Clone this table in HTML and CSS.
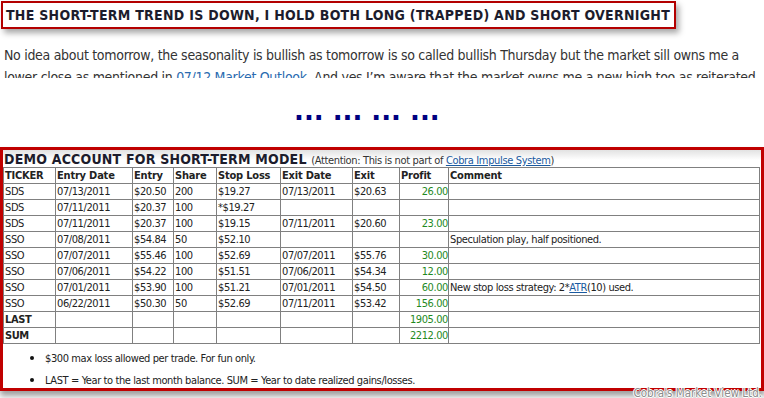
FILE: index.html
```html
<!DOCTYPE html>
<html>
<head>
<meta charset="utf-8">
<link rel="stylesheet" href="styles.css">
</head>
<body>
<div class="page">
  <div class="headline-wrap">
    <h2 class="headline">THE SHORT-TERM TREND IS DOWN, I HOLD BOTH LONG (TRAPPED) AND SHORT OVERNIGHT</h2>
  </div>
  <div class="excerpt">
    <p>No idea about tomorrow, the seasonality is bullish as tomorrow is so called bullish Thursday but the market sill owns me a lower close as mentioned in <a href="#">07/12 Market Outlook</a>. And yes I’m aware that the market owns me a new high too as reiterated many times.</p>
  </div>
  <div class="dots">... ... ... ...</div>
  <div class="demo">
    <div class="demo-title"><b>DEMO ACCOUNT FOR SHORT-TERM MODEL</b> <span class="note">(Attention: This is not part of <a href="#">Cobra Impulse System</a>)</span></div>
    <table class="trades">
      <colgroup>
        <col class="c1"><col class="c2"><col class="c3"><col class="c4"><col class="c5"><col class="c6"><col class="c7"><col class="c8"><col class="c9">
      </colgroup>
      <thead>
        <tr><th>TICKER</th><th>Entry Date</th><th>Entry</th><th>Share</th><th>Stop Loss</th><th>Exit Date</th><th>Exit</th><th>Profit</th><th>Comment</th></tr>
      </thead>
      <tbody>
        <tr><td>SDS</td><td>07/13/2011</td><td>$20.50</td><td>200</td><td>$19.27</td><td>07/13/2011</td><td>$20.63</td><td class="profit">26.00</td><td></td></tr>
        <tr><td>SDS</td><td>07/11/2011</td><td>$20.37</td><td>100</td><td>*$19.27</td><td></td><td></td><td class="profit"></td><td></td></tr>
        <tr><td>SDS</td><td>07/11/2011</td><td>$20.37</td><td>100</td><td>$19.15</td><td>07/11/2011</td><td>$20.60</td><td class="profit">23.00</td><td></td></tr>
        <tr><td>SSO</td><td>07/08/2011</td><td>$54.84</td><td>50</td><td>$52.10</td><td></td><td></td><td class="profit"></td><td>Speculation play, half positioned.</td></tr>
        <tr><td>SSO</td><td>07/07/2011</td><td>$55.46</td><td>100</td><td>$52.69</td><td>07/07/2011</td><td>$55.76</td><td class="profit">30.00</td><td></td></tr>
        <tr><td>SSO</td><td>07/06/2011</td><td>$54.22</td><td>100</td><td>$51.51</td><td>07/06/2011</td><td>$54.34</td><td class="profit">12.00</td><td></td></tr>
        <tr><td>SSO</td><td>07/01/2011</td><td>$53.90</td><td>100</td><td>$51.21</td><td>07/01/2011</td><td>$54.50</td><td class="profit">60.00</td><td>New stop loss strategy: 2*<a href="#">ATR</a>(10) used.</td></tr>
        <tr><td>SSO</td><td>06/22/2011</td><td>$50.30</td><td>50</td><td>$52.69</td><td>07/11/2011</td><td>$53.42</td><td class="profit">156.00</td><td></td></tr>
        <tr><td><b>LAST</b></td><td></td><td></td><td></td><td></td><td></td><td></td><td class="profit">1905.00</td><td></td></tr>
        <tr><td><b>SUM</b></td><td></td><td></td><td></td><td></td><td></td><td></td><td class="profit">2212.00</td><td></td></tr>
      </tbody>
    </table>
    <ul class="notes">
      <li>$300 max loss allowed per trade. For fun only.</li>
      <li>LAST = Year to the last month balance. SUM = Year to date realized gains/losses.</li>
    </ul>
  </div>
  <div class="watermark">Cobra's Market View Ltd.</div>
</div>
</body>
</html>
```
FILE: styles.css
```css
html, body {
  margin: 0;
  padding: 0;
  background: #fff;
}
.page {
  position: relative;
  width: 764px;
  height: 398px;
  overflow: hidden;
  font-family: "DejaVu Sans Condensed", "DejaVu Sans", sans-serif;
  color: #333;
}
.headline-wrap {
  padding: 1px 0 0 1px;
}
.headline {
  display: inline-block;
  margin: 0;
  padding: 4px 4px 3px 3px;
  border: 2px solid #b30000;
  box-shadow: 3px 4px 6px rgba(0, 0, 0, 0.35);
  font-size: 14px;
  font-weight: bold;
  letter-spacing: 0.28px;
  line-height: 17px;
  color: #1c1c2c;
}
.excerpt {
  margin-top: 15px;
  height: 34px;
  overflow: hidden;
  padding-left: 4px;
  width: 758px;
}
.excerpt p {
  margin: 0;
  font-size: 14px;
  letter-spacing: -0.3px;
  line-height: 22px;
  color: #333;
}
.excerpt p a {
  color: #2a6bb0;
  text-decoration: none;
}
.dots {
  margin-top: 23px;
  padding-left: 294px;
  height: 46px;
  font-family: "DejaVu Sans", sans-serif;
  font-weight: bold;
  font-size: 26px;
  line-height: 20px;
  color: #000080;
  white-space: pre;
}
.demo {
  border: 3px solid #c00000;
  border-right-width: 4px;
  margin-right: -1px;
  height: 238px;
  box-shadow: 0 5px 6px rgba(0, 0, 0, 0.38);
  background: linear-gradient(180deg, #e2e2e2 0, #fff 10px);
}
.demo-title {
  padding: 1px 0 0 1px;
  height: 16px;
  line-height: 15px;
  white-space: nowrap;
  color: #1c1c2c;
}
.demo-title b {
  font-size: 14px;
  letter-spacing: 0.2px;
}
.note {
  font-size: 11px;
  letter-spacing: -0.35px;
  color: #333;
}
.note a, .trades a {
  color: #1a5aa0;
  text-decoration: underline;
}
.trades {
  border-collapse: collapse;
  table-layout: fixed;
  width: 757px;
  border: 1px solid #333;
  font-size: 11px;
  letter-spacing: -0.4px;
}
.c1 { width: 52px; }
.c2 { width: 77px; }
.c3 { width: 41px; }
.c4 { width: 43px; }
.c5 { width: 64px; }
.c6 { width: 72px; }
.c7 { width: 47px; }
.c8 { width: 49px; }
.c9 { width: auto; }
.trades th, .trades td {
  border: 1px solid #808080;
  height: 15px;
  padding: 0 0 0 1px;
  line-height: 15px;
  text-align: left;
  white-space: nowrap;
  overflow: hidden;
  color: #222;
}
.trades th {
  font-weight: bold;
  letter-spacing: -0.2px;
}
.trades td.profit {
  text-align: right;
  padding: 0;
  color: #1f8a1f;
}
.notes {
  margin: 2px 0 0;
  padding-left: 42px;
  font-size: 11px;
  letter-spacing: -0.4px;
  color: #222;
}
.notes li {
  height: 22px;
  line-height: 22px;
  list-style: disc;
}
.notes li::marker {
  font-size: 14px;
  color: #111;
}
.watermark {
  position: absolute;
  right: 2px;
  bottom: -1px;
  font-family: "DejaVu Sans Condensed", sans-serif;
  font-size: 11.5px;
  line-height: 12px;
  color: #8c8c8c;
  text-shadow: 1px 0 0 #fff, -1px 0 0 #fff, 0 1px 0 #fff, 0 -1px 0 #fff;
}
```
